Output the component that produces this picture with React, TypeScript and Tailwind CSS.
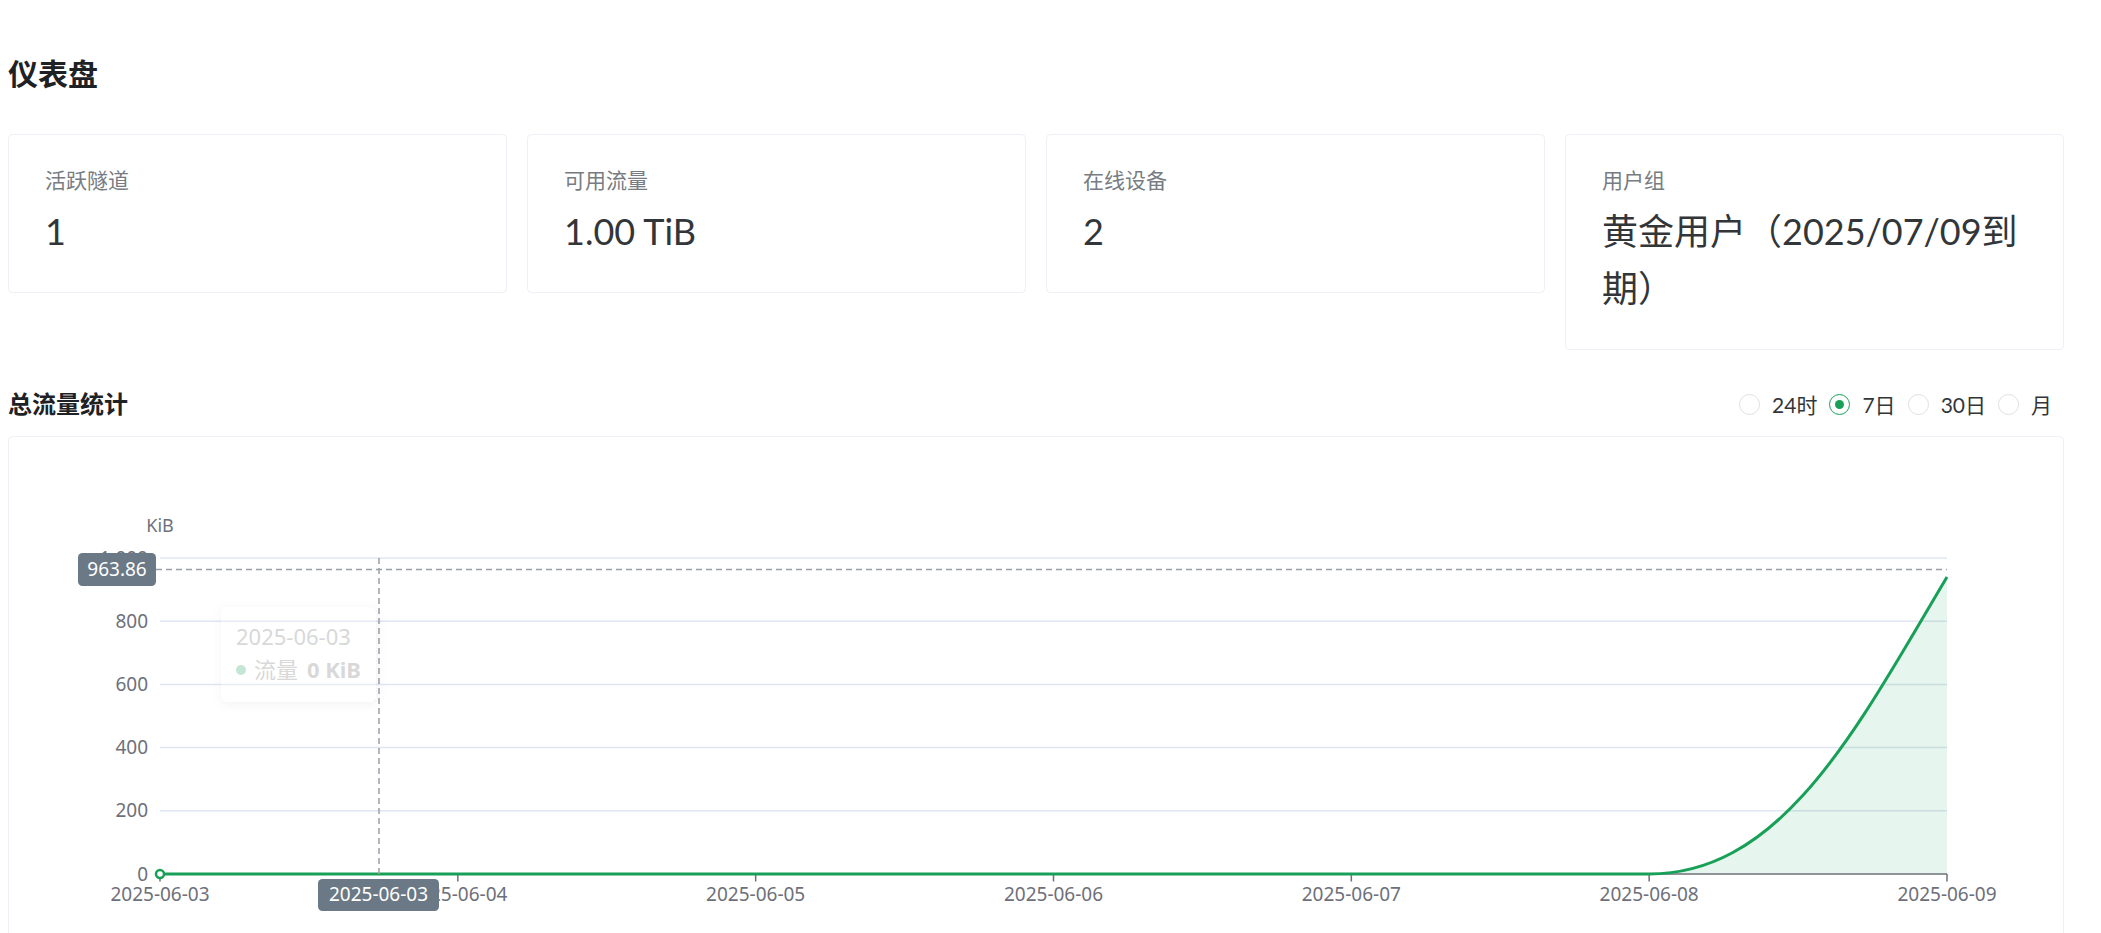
import React from "react";

const stats = [
  { label: "活跃隧道", value: "1" },
  { label: "可用流量", value: "1.00 TiB" },
  { label: "在线设备", value: "2" },
  { label: "用户组", value: "黄金用户（2025/07/09到期）" },
];

const ranges = [
  { key: "24h", label: "24时" },
  { key: "7d", label: "7日" },
  { key: "30d", label: "30日" },
  { key: "month", label: "月" },
];

const dates = [
  "2025-06-03",
  "2025-06-04",
  "2025-06-05",
  "2025-06-06",
  "2025-06-07",
  "2025-06-08",
  "2025-06-09",
];

function StatCard({ label, value }: { label: string; value: string }) {
  return (
    <div className="rounded-[4.5px] border border-[#efeff5] bg-white px-[36px] pt-[28px] pb-[32px]">
      <div className="text-[21px] leading-[33px] text-[#767c82]">{label}</div>
      <div className="mt-[7px] text-[36px] leading-[57px] text-[#333639]">
        {value}
      </div>
    </div>
  );
}

function Radio({ label, checked }: { label: string; checked?: boolean }) {
  return (
    <label className="flex cursor-pointer items-center">
      <span
        className={
          checked
            ? "flex h-[21px] w-[21px] items-center justify-center rounded-full border-[1.5px] border-[#18a058]"
            : "flex h-[21px] w-[21px] items-center justify-center rounded-full border-[1.5px] border-[#e0e0e6]"
        }
      >
        {checked && <span className="h-[9px] w-[9px] rounded-full bg-[#18a058]" />}
      </span>
      <span className="px-[12px] text-[21px] leading-[33px] text-[#333639]">
        {label}
      </span>
    </label>
  );
}

// chart geometry, in card-local px
const X0 = 151;
const X1 = 1938;
const STEP = (X1 - X0) / 6;
const Y0 = 437;
const yOf = (v: number) => Y0 - (v / 1000) * 316;

function TrafficChart() {
  const xEnd = X1;
  const yEnd = yOf(940);
  const x8 = X0 + STEP * 5;
  const curve = `M ${x8} ${Y0} C ${x8 + STEP * 0.45} ${Y0}, ${xEnd - STEP * 0.3} ${yEnd + 150}, ${xEnd} ${yEnd}`;
  const chartText = "font-['Noto_Sans',sans-serif]";

  return (
    <svg width={2054} height={500} className={`block ${chartText}`}>
      {/* split lines */}
      {[200, 400, 600, 800, 1000].map((v) => (
        <line
          key={v}
          x1={X0}
          x2={X1}
          y1={yOf(v)}
          y2={yOf(v)}
          stroke="#E0E6F1"
          strokeWidth={1.5}
        />
      ))}

      {/* y labels */}
      <text x={X0} y={95} textAnchor="middle" fontSize={18} fill="#6E7079">
        KiB
      </text>
      {[0, 200, 400, 600, 800, 1000].map((v) => (
        <text
          key={v}
          x={139}
          y={yOf(v) + 6.5}
          textAnchor="end"
          fontSize={19}
          fill="#6E7079"
        >
          {v === 1000 ? "1,000" : v}
        </text>
      ))}

      {/* area + axis */}
      <path d={`${curve} L ${xEnd} ${Y0} Z`} fill="rgba(24,160,88,0.11)" />
      <line x1={X0} x2={X1} y1={Y0} y2={Y0} stroke="#6E7079" strokeWidth={1.5} />
      {dates.map((d, i) => (
        <g key={d}>
          <line
            x1={X0 + STEP * i}
            x2={X0 + STEP * i}
            y1={Y0}
            y2={Y0 + 7.5}
            stroke="#6E7079"
            strokeWidth={1.5}
          />
          <text
            x={X0 + STEP * i}
            y={464}
            textAnchor="middle"
            fontSize={19}
            fill="#6E7079"
          >
            {d}
          </text>
        </g>
      ))}

      {/* series */}
      <path
        d={`M ${X0} ${Y0} L ${x8} ${Y0} ${curve.slice(curve.indexOf("C"))}`}
        fill="none"
        stroke="#18a058"
        strokeWidth={3}
      />
      <circle cx={X0} cy={Y0} r={4} fill="#fff" stroke="#18a058" strokeWidth={2.5} />

      {/* cross pointer */}
      <line
        x1={147}
        x2={X1}
        y1={132.4}
        y2={132.4}
        stroke="#9a9ea6"
        strokeWidth={1.5}
        strokeDasharray="6 4"
      />
      <line
        x1={370}
        x2={370}
        y1={yOf(1000)}
        y2={Y0}
        stroke="#9a9ea6"
        strokeWidth={1.5}
        strokeDasharray="6 4"
      />
      <rect x={69} y={116} width={78} height={33} rx={4.5} fill="#6a7985" />
      <text x={108} y={139} textAnchor="middle" fontSize={19} fill="#fff">
        963.86
      </text>
      <rect x={309} y={442} width={121} height={32} rx={4.5} fill="#6a7985" />
      <text x={369.5} y={464} textAnchor="middle" fontSize={19} fill="#fff">
        2025-06-03
      </text>
    </svg>
  );
}

export default function App() {
  return (
    <div className="min-h-screen bg-white pl-2 pr-[37px] font-['Lato','Noto_Sans_CJK_SC',sans-serif] text-[#333639]">
      <h1 className="pt-[52px] text-[30px] font-bold leading-[42px] text-[#1f2225]">
        仪表盘
      </h1>

      {/* stat cards */}
      <div className="mt-[40px] grid grid-cols-4 items-start gap-[20px]">
        {stats.map((s) => (
          <StatCard key={s.label} label={s.label} value={s.value} />
        ))}
      </div>

      {/* traffic */}
      <div className="mt-[36px] flex h-[36px] items-center justify-between">
        <div className="text-[24px] font-bold leading-[36px] text-[#1f2225]">
          总流量统计
        </div>
        <div className="flex items-center">
          {ranges.map((r) => (
            <Radio key={r.key} label={r.label} checked={r.key === "7d"} />
          ))}
        </div>
      </div>

      <div className="relative mt-[14px] h-[520px] rounded-[4.5px] border border-[#efeff5] bg-white">
        <TrafficChart />

        {/* tooltip fading out */}
        <div className="absolute left-[212px] top-[170px] h-[95px] w-[155px] rounded-[6px] bg-white px-[15px] pt-[14px] font-['Noto_Sans','Noto_Sans_CJK_SC',sans-serif] text-[#666] opacity-25 shadow-[1px_2px_10px_rgba(0,0,0,0.2)]">
          <div className="text-[22px] leading-[31px]">2025-06-03</div>
          <div className="mt-[2px] flex items-center justify-between text-[22px] leading-[31px]">
            <span className="flex items-center">
              <span className="mr-[8px] h-[10px] w-[10px] rounded-full bg-[#18a058]" />
              流量
            </span>
            <span className="font-bold">0 KiB</span>
          </div>
        </div>
      </div>
    </div>
  );
}
